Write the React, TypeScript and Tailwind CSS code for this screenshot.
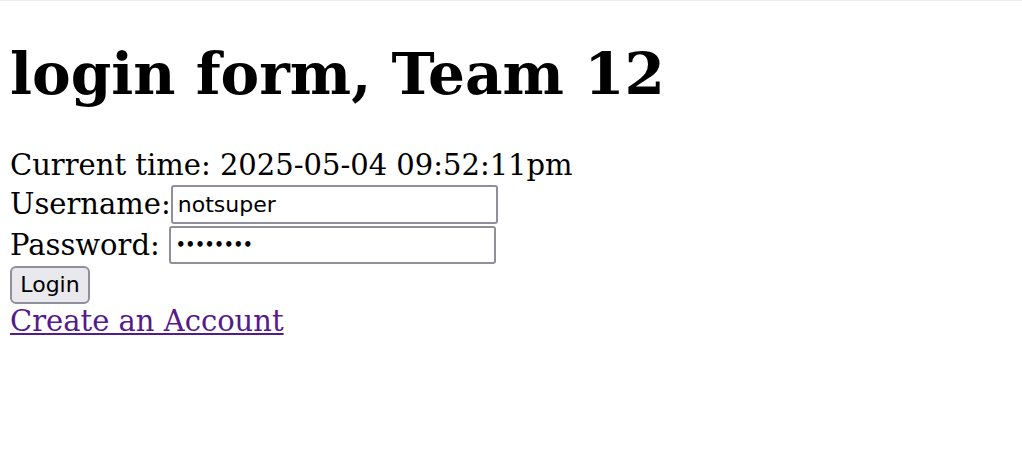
export default function App() {
  return (
    <div className="min-h-screen bg-white border-t border-[#ececec] px-[10px] text-black font-['DejaVu_Serif',serif]">
      <h1 className="mt-[44px] text-[58px] font-bold leading-none">login form, Team 12</h1>
      <div className="mt-[48px] text-[29px] leading-none">Current time: 2025-05-04 09:52:11pm</div>
      <form className="mt-[5px] flex flex-col text-[29px] leading-none" onSubmit={(e) => e.preventDefault()}>
        <div className="flex items-center">
          <label htmlFor="username">Username:</label>
          <input
            id="username"
            type="text"
            defaultValue="notsuper"
            className="h-[39px] w-[327px] rounded-[3px] border-2 border-[#8f8f9d] px-[5px] text-[22px] font-['DejaVu_Sans',sans-serif] outline-none"
          />
        </div>
        <div className="mt-[2px] flex items-center">
          <label htmlFor="password" className="whitespace-pre">Password: </label>
          <input
            id="password"
            type="password"
            defaultValue="password"
            className="h-[38px] w-[327px] rounded-[3px] border-2 border-[#8f8f9d] px-[5px] text-[15px] font-bold font-['DejaVu_Sans',sans-serif] outline-none"
          />
        </div>
        <div className="mt-[2px]">
          <button
            type="submit"
            className="h-[38px] w-[80px] rounded-[6px] border-2 border-[#8f8f9d] bg-[#e9e9ed] text-[22px] font-['DejaVu_Sans',sans-serif]"
          >
            Login
          </button>
        </div>
      </form>
      <a href="#" className="mt-[3px] inline-block text-[29px] leading-none text-[#551a8b] underline">
        Create an Account
      </a>
    </div>
  )
}
